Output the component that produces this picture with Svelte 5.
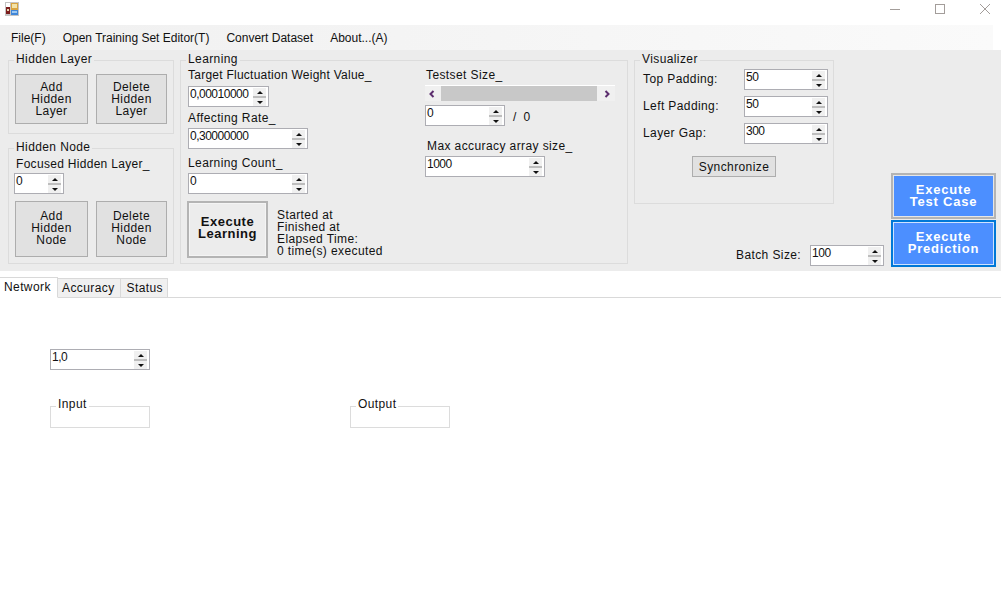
<script>
    const menu = ["File(F)", "Open Training Set Editor(T)", "Convert Dataset", "About...(A)"];
    const tabs = ["Network", "Accuracy", "Status"];
</script>

{#snippet spinner(value, size)}
    <div class="spin {size}">
        <span class="val">{value}</span>
        <div class="arrows">
            <button class="arrow up" aria-label="up"></button>
            <button class="arrow down" aria-label="down"></button>
        </div>
    </div>
{/snippet}

<div class="window">
    <header class="titlebar">
        <svg class="appicon" width="14" height="14" viewBox="0 0 14 14">
            <rect width="14" height="14" fill="#c4c4c4" />
            <rect x="1" y="1" width="4" height="4" fill="#fff" />
            <rect x="6" y="1" width="7" height="7" fill="#d9a441" />
            <rect x="7" y="2" width="5" height="4" fill="#f3e3a8" />
            <rect x="1" y="5" width="4" height="7" fill="#7b1e1e" />
            <rect x="2" y="7" width="2" height="2" fill="#e8d8b0" />
            <rect x="6" y="8" width="7" height="5" fill="#3f86d8" />
            <rect x="7" y="9" width="5" height="2" fill="#9cc8f2" />
        </svg>
        <div class="winbtns">
            <svg width="12" height="12" viewBox="0 0 12 12"><path d="M1 6.5h10" stroke="#a39d9a" fill="none" /></svg>
            <svg width="12" height="12" viewBox="0 0 12 12"><rect x="1.5" y="1.5" width="9" height="9" stroke="#a39d9a" fill="none" /></svg>
            <svg width="12" height="12" viewBox="0 0 12 12"><path d="M1 1l10 10M11 1L1 11" stroke="#a39d9a" fill="none" /></svg>
        </div>
    </header>

    <nav class="menubar">
        {#each menu as item}
            <span class="menuitem">{item}</span>
        {/each}
    </nav>

    <section class="toppanel">
        <div class="col-left">
            <fieldset class="group g-layer">
                <legend>Hidden Layer</legend>
                <div class="btnrow">
                    <button class="flat b-add">Add<br />Hidden<br />Layer</button>
                    <button class="flat b-del">Delete<br />Hidden<br />Layer</button>
                </div>
            </fieldset>
            <fieldset class="group g-node">
                <legend>Hidden Node</legend>
                <div class="lbl focused">Focused Hidden Layer_</div>
                {@render spinner("0", "w50")}
                <div class="btnrow nodebtns">
                    <button class="flat b-add">Add<br />Hidden<br />Node</button>
                    <button class="flat b-del">Delete<br />Hidden<br />Node</button>
                </div>
            </fieldset>
        </div>

        <fieldset class="group g-learning">
            <legend>Learning</legend>
            <div class="learn-cols">
                <div class="learn-a">
                    <div class="lbl target">Target Fluctuation Weight Value_</div>
                    {@render spinner("0,00010000", "w81")}
                    <div class="lbl rate">Affecting Rate_</div>
                    {@render spinner("0,30000000", "w120")}
                    <div class="lbl count">Learning Count_</div>
                    {@render spinner("0", "w120")}
                    <div class="exec-row">
                        <button class="exec-learn">Execute<br />Learning</button>
                        <div class="times">Started at<br />Finished at<br />Elapsed Time:<br />0 time(s) executed</div>
                    </div>
                </div>
                <div class="learn-b">
                    <div class="lbl">Testset Size_</div>
                    <div class="scroll">
                        <svg width="8" height="8" viewBox="0 0 8 8"><path d="M5.5 1L2.5 4l3 3" stroke="#5c2d6e" stroke-width="2" fill="none" /></svg>
                        <div class="track"></div>
                        <svg width="8" height="8" viewBox="0 0 8 8"><path d="M2.5 1l3 3-3 3" stroke="#5c2d6e" stroke-width="2" fill="none" /></svg>
                    </div>
                    <div class="row-of">
                        {@render spinner("0", "w80")}
                        <span class="of">/ 0</span>
                    </div>
                    <div class="lbl max">Max accuracy array size_</div>
                    {@render spinner("1000", "w120")}
                </div>
            </div>
        </fieldset>

        <fieldset class="group g-vis">
            <legend>Visualizer</legend>
            <div class="visrow"><span>Top Padding:</span>{@render spinner("50", "w84")}</div>
            <div class="visrow"><span>Left Padding:</span>{@render spinner("50", "w84")}</div>
            <div class="visrow"><span>Layer Gap:</span>{@render spinner("300", "w84")}</div>
            <button class="flat sync">Synchronize</button>
        </fieldset>

        <div class="batch">
            <span>Batch Size:</span>
            {@render spinner("100", "w74")}
        </div>

        <div class="col-exec">
            <button class="exec">Execute<br />Test Case</button>
            <button class="exec focus">Execute<br />Prediction</button>
        </div>
    </section>

    <div class="tabs">
        {#each tabs as tab, i}
            <div class="tab" class:active={i === 0}>{tab}</div>
        {/each}
    </div>

    <main class="canvas">
        {@render spinner("1,0", "w100")}
        <div class="io">
            <fieldset class="group box"><legend>Input</legend></fieldset>
            <fieldset class="group box"><legend>Output</legend></fieldset>
        </div>
    </main>
</div>

<style>
    :global(body) {
        margin: 0;
        background: #fff;
    }
    .window {
        width: 1001px;
        height: 611px;
        overflow: hidden;
        font-family: "Liberation Sans", Arial, sans-serif;
        font-size: 12px;
        letter-spacing: 0.4px;
        color: #111;
    }
    .titlebar {
        height: 25px;
        display: flex;
        justify-content: space-between;
        background: #fff;
    }
    .appicon {
        margin: 2px 0 0 5px;
    }
    .winbtns {
        display: flex;
        gap: 33px;
        padding: 3px 10px 0 0;
    }
    .menubar {
        height: 25px;
        width: 993px;
        display: flex;
        align-items: center;
        gap: 17px;
        padding-left: 11px;
        box-sizing: border-box;
        letter-spacing: 0;
        background: linear-gradient(to right, #f0f0f0, #fafafa);
    }
    .toppanel {
        height: 221px;
        background: #ececec;
        display: flex;
        position: relative;
        padding: 2px 0 0 8px;
        box-sizing: border-box;
    }
    .group {
        margin: 0;
        padding: 0;
        border: 1px solid #dcdcdc;
        min-width: 0;
        box-sizing: border-box;
    }
    legend {
        margin-left: 5px;
        padding: 0 2px 2px;
        line-height: 14px;
    }
    .col-left {
        width: 166px;
        margin-right: 6px;
    }
    .g-layer {
        height: 82px;
    }
    .g-node {
        height: 124px;
        margin-top: 6px;
        padding-left: 5px;
    }
    .g-node legend {
        margin-left: 0;
    }
    .btnrow {
        display: flex;
        gap: 8px;
        padding: 6px 0 0 6px;
    }
    .nodebtns {
        padding: 7px 0 0 1px;
    }
    .flat {
        font: inherit;
        letter-spacing: inherit;
        color: inherit;
        background: #e1e1e1;
        border: 1px solid #adadad;
        padding: 0;
        line-height: 12px;
    }
    .b-add {
        width: 73px;
        height: 50px;
    }
    .b-del {
        width: 71px;
        height: 50px;
    }
    .nodebtns .flat {
        height: 56px;
        padding-bottom: 3px;
    }
    .lbl {
        line-height: 14px;
    }
    .focused {
        padding: 1px 0 2px 2px;
        letter-spacing: 0.3px;
    }
    .spin {
        height: 21px;
        box-sizing: border-box;
        border: 1px solid #adadb3;
        background: #fff;
        display: flex;
        justify-content: space-between;
        align-items: flex-start;
    }
    .val {
        padding-left: 1px;
        line-height: 14px;
        letter-spacing: -0.5px;
    }
    .arrows {
        width: 13px;
        height: 18px;
        margin: 1px 2px 0 0;
        display: flex;
        flex-direction: column;
        gap: 2px;
        background: #bdbdbd;
    }
    .arrow {
        flex: 1;
        padding: 0;
        border: none;
        background: #f0f0f0;
        display: flex;
        align-items: center;
        justify-content: center;
    }
    .arrow::before {
        content: "";
        border-left: 3px solid transparent;
        border-right: 3px solid transparent;
    }
    .up::before {
        border-bottom: 3px solid #111;
    }
    .down::before {
        border-top: 3px solid #111;
    }
    .w50 { width: 50px; }
    .w74 { width: 74px; }
    .w80 { width: 80px; }
    .w81 { width: 81px; }
    .w84 { width: 84px; }
    .w100 { width: 100px; }
    .w120 { width: 120px; }
    .g-learning {
        width: 448px;
        height: 212px;
        margin-right: 6px;
    }
    .learn-cols {
        display: flex;
    }
    .learn-a {
        width: 245px;
        padding-left: 7px;
        box-sizing: border-box;
    }
    .target {
        letter-spacing: 0.25px;
        margin-bottom: 4px;
    }
    .rate {
        margin: 4px 0 3px;
    }
    .count {
        margin: 7px 0 3px;
    }
    .exec-row {
        display: flex;
        align-items: center;
        gap: 9px;
        margin-top: 7px;
        margin-left: -1px;
    }
    .exec-learn {
        width: 81px;
        height: 57px;
        font: inherit;
        font-weight: 700;
        font-size: 13px;
        line-height: 12px;
        letter-spacing: 0.5px;
        color: #111;
        background: #ececec;
        border: 2px solid #b4b4b4;
        box-shadow: inset 0 0 0 1px #f4f4f4;
        padding: 0 0 4px;
    }
    .times {
        line-height: 12px;
        margin-top: 7px;
    }
    .learn-b {
        flex: 1;
    }
    .scroll {
        width: 190px;
        height: 16px;
        margin: 3px 0 4px -1px;
        background: #f0f0f0;
        border-top: 1px solid #fff;
        display: flex;
        align-items: center;
        justify-content: space-between;
        padding: 0 15px 0 16px;
        box-sizing: border-box;
        position: relative;
    }
    .track {
        position: absolute;
        left: 16px;
        right: 18px;
        top: 0;
        bottom: 0;
        background: #c8c8c8;
    }
    .scroll svg:first-child {
        margin-left: -13px;
    }
    .scroll svg:last-child {
        margin-right: -11px;
    }
    .row-of {
        display: flex;
        align-items: center;
        gap: 8px;
        margin-left: -1px;
    }
    .of {
        padding-top: 2px;
        word-spacing: 3px;
    }
    .max {
        margin: 13px 0 3px 1px;
    }
    .learn-b > .spin {
        margin-left: -1px;
    }
    .g-vis {
        width: 200px;
        height: 152px;
        padding: 1px 5px 0 8px;
    }
    .g-vis legend {
        margin-left: -3px;
    }
    .visrow {
        display: flex;
        justify-content: space-between;
        align-items: center;
        height: 21px;
        margin-bottom: 6px;
    }
    .visrow span {
        padding-bottom: 2px;
    }
    .sync {
        display: block;
        width: 84px;
        height: 21px;
        margin: 12px 0 0 49px;
    }
    .batch {
        position: absolute;
        left: 736px;
        top: 195px;
        display: flex;
        align-items: center;
        gap: 9px;
    }
    .batch span {
        padding-bottom: 2px;
    }
    .col-exec {
        position: absolute;
        left: 891px;
        top: 123px;
        display: flex;
        flex-direction: column;
        gap: 1px;
    }
    .exec {
        width: 105px;
        height: 46px;
        box-sizing: border-box;
        font: inherit;
        font-weight: 700;
        font-size: 13px;
        line-height: 12px;
        letter-spacing: 0.8px;
        color: #fff;
        background: #4c8fff;
        border: 2px solid #b4b4b4;
        box-shadow: inset 0 0 0 1px #e6e6e6;
        padding: 0;
    }
    .focus {
        height: 47px;
        border: 2px solid #0078d7;
        box-shadow: inset 0 0 0 1px #cfe2ff;
        padding-bottom: 2px;
    }
    .tabs {
        display: flex;
        align-items: flex-end;
        height: 27px;
        box-sizing: border-box;
        border-bottom: 1px solid #d9d9d9;
    }
    .tab {
        height: 18px;
        margin-bottom: -1px;
        padding: 0 5px 0 4px;
        line-height: 18px;
        background: #f0f0f0;
        border: 1px solid #d9d9d9;
        border-left: none;
    }
    .tab:last-child {
        padding: 0 4px 0 6px;
    }
    .tab.active {
        height: 21px;
        line-height: 18px;
        width: 58px;
        box-sizing: border-box;
        background: #fff;
        padding: 0 0 0 4px;
        border-bottom: 1px solid #fff;
    }
    .canvas {
        padding: 51px 0 0 50px;
    }
    .io {
        display: flex;
        gap: 200px;
        margin-top: 27px;
    }
    .box {
        width: 100px;
        height: 31px;
    }
    .box legend {
        padding-bottom: 4px;
    }
</style>
